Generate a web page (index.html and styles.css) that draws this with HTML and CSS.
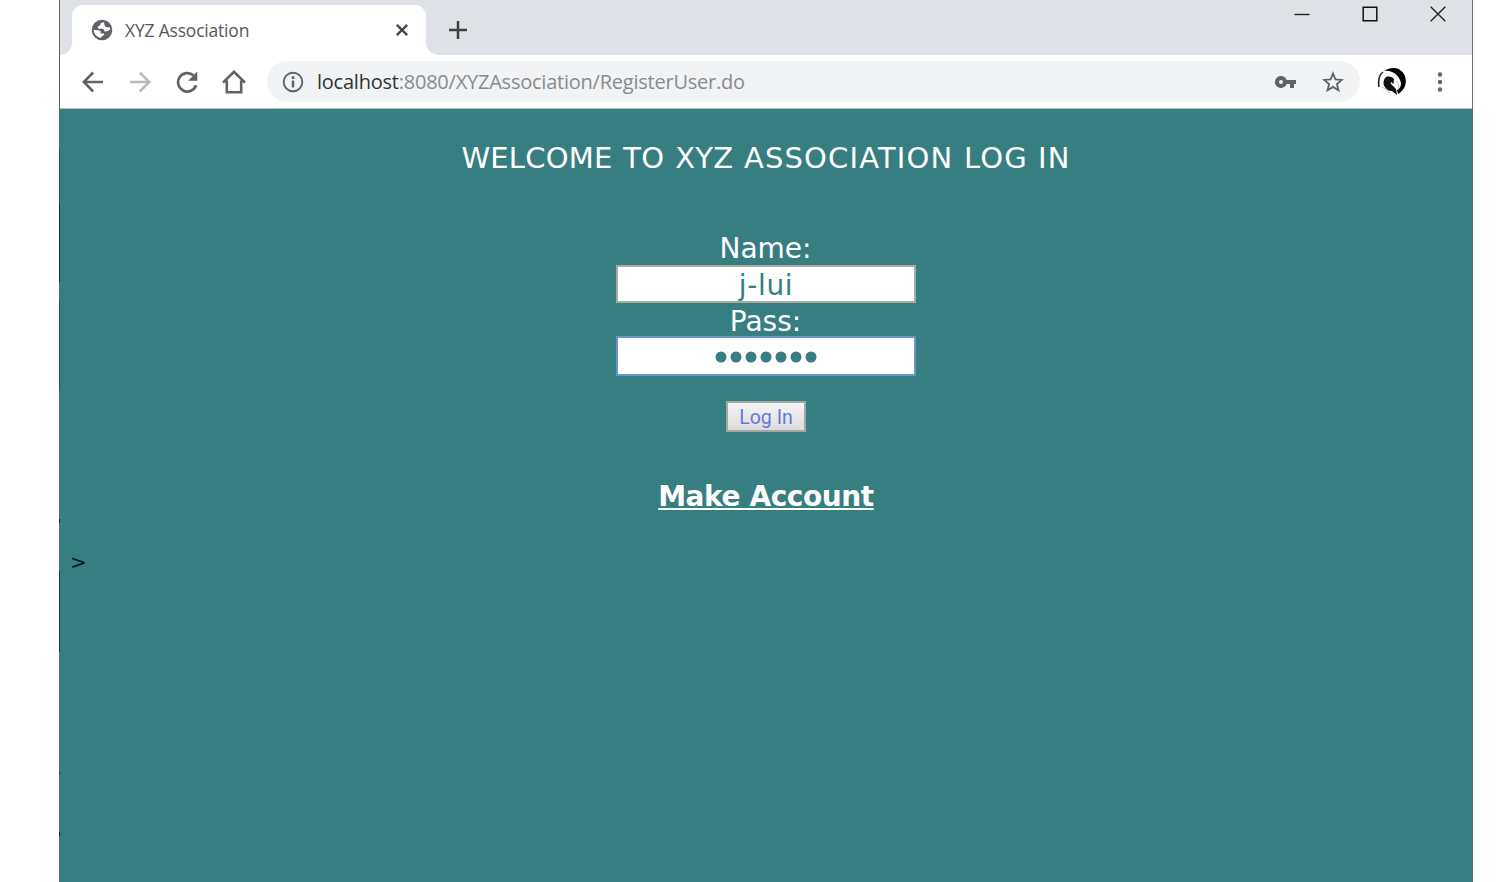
FILE: index.html
```html
<!DOCTYPE html>
<html lang="en">
<head>
<meta charset="utf-8">
<title>XYZ Association</title>
<link rel="stylesheet" href="styles.css">
</head>
<body>
<div class="window">
  <header class="tabstrip">
    <div class="tab">
      <svg class="globe" width="22" height="22" viewBox="0 0 22 22"><circle cx="11" cy="11" r="10.3" fill="#5f6368"/><path d="M13 3.200C10.800 3.200 9 4.300 9.300 5.800c.2 1.200-2.500 1-2.500 2.600 0 1.400 1.500 1.300 3 1.300 2.200 0 3.500.6 3.500 2 0 1.300 2 .9 3.400.4 1-.4 1.500-1 2.600-1 0-1-.3-2.200-.8-3.200-1.200.4-2.800.6-4-.2-1.300-1-.8-2.900-1.500-4.500z" fill="#fff"/><path d="M2.600 10.800c2.500.4 4.500.3 6 1 1.700.8 1.600 1.700.4 2.400 1.600.6 3.400-.3 4.300.8 0 1.500-2.600 1.700-3.400 4A8.600 8.600 0 0 1 2.600 10.800z" fill="#fff"/></svg>
      <span class="tab-title">XYZ Association</span>
      <svg class="tab-close" width="14" height="14" viewBox="0 0 14 14"><path d="M1.800 1.800 12.200 12.200M12.200 1.800 1.800 12.200" stroke="#45494d" stroke-width="2.400"/></svg>
    </div>
    <svg class="new-tab" width="18" height="18" viewBox="0 0 18 18"><path d="M9 0v18M0 9h18" stroke="#3c4043" stroke-width="2.500"/></svg>
    <div class="controls">
      <svg width="16" height="16" viewBox="0 0 16 16"><path d="M.5 8.500h15" stroke="#222" stroke-width="1.400"/></svg>
      <svg width="16" height="16" viewBox="0 0 16 16"><path d="M1.200 1.200h13.600v13.600H1.200z" fill="none" stroke="#111" stroke-width="1.500"/></svg>
      <svg width="16" height="16" viewBox="0 0 16 16"><path d="m.7.700 14.600 14.600M15.300.7.700 15.300" stroke="#222" stroke-width="1.400"/></svg>
    </div>
  </header>
  <div class="toolbar">
    <svg class="back" width="22" height="22" viewBox="0 0 22 22"><path d="M21 11H2M11.200 1.500 1.800 11l9.400 9.500" fill="none" stroke="#5f6368" stroke-width="2.500"/></svg>
    <svg class="forward" width="22" height="22" viewBox="0 0 22 22"><path d="M1 11h19M10.800 1.500l9.400 9.500-9.400 9.500" fill="none" stroke="#b9bbbd" stroke-width="2.500"/></svg>
    <svg class="reload" width="22" height="22" viewBox="0 0 22 22"><path d="M20 14.200A9.200 9.200 0 1 1 17.600 4.600" fill="none" stroke="#5f6368" stroke-width="2.700"/><path d="M21.300.6v9.100h-9.100z" fill="#5f6368"/></svg>
    <svg class="home" width="24" height="24" viewBox="0 0 24 24"><path d="M1 12.700 12 1.800l11 10.900M4.800 10.500v11.800h14.400V10.500" fill="none" stroke="#5f6368" stroke-width="2.600"/></svg>
    <div class="address">
      <svg class="info" width="22" height="22" viewBox="0 0 22 22"><circle cx="11" cy="11" r="9.300" fill="none" stroke="#5f6368" stroke-width="1.900"/><path d="M11 9.400v7M11 5.200v2.700" stroke="#5f6368" stroke-width="2.500"/></svg>
      <span class="url"><span class="host">localhost</span>:8080/XYZAssociation/RegisterUser.do</span>
      <svg class="key" width="22" height="14" viewBox="0 0 22 14"><path fill-rule="evenodd" d="M6 1a6 6 0 1 0 5.600 8H15v4h4V9h2V5h-9.400A6 6 0 0 0 6 1zm0 4a2 2 0 1 1 0 4 2 2 0 0 1 0-4z" fill="#5f6368"/></svg>
      <svg class="star" width="22" height="22" viewBox="0 0 22 22"><path d="m11 2.500 2.400 5.900 6.500.5-5 4.100 1.600 6.300-5.500-3.400-5.500 3.400L7.100 13l-5-4.100 6.500-.5z" fill="none" stroke="#5f6368" stroke-width="1.800"/></svg>
    </div>
    <svg class="avatar" width="30" height="30" viewBox="0 0 30 30"><circle cx="15" cy="15" r="14" fill="#fafafa"/><path d="M7 4C14-1 23 0 27 7c4 8 1 16-6 20l-1-4c4-2 5-6 3-10-2-5-6-8-11-9-2-.4-4-.3-5 0z" fill="#000"/><path d="M8 11c2-2 6-2 9 1l-.5 5-2.500-2c-1 1 0 2 1 3l4 4 1 6-5-4c-4 0-6-2-7-4-2-2-2-6 0-9z" fill="#111"/><path d="M6 5C1 9 1 14 2 20" fill="none" stroke="#222" stroke-width="1.600"/><path d="M19 14c3 3 3 6 2 9M5 20c3 1 4 4 8 6" fill="none" stroke="#bbb"/></svg>
    <svg class="menu" width="6" height="20" viewBox="0 0 6 20"><g fill="#5f6368"><circle cx="3" cy="2.500" r="2.200"/><circle cx="3" cy="10" r="2.200"/><circle cx="3" cy="17.500" r="2.200"/></g></svg>
  </div>
  <main class="page">
    <h1 class="heading"><span class="tight">WELCOME TO XYZ</span> <span class="loose">ASSOCIATION</span> <span class="medium">LOG IN</span></h1>
    <form class="login">
      <label class="label name-label" for="name">Name:</label>
      <input class="field" id="name" type="text" value="j-lui">
      <label class="label pass-label">Pass:</label>
      <div class="field focused"><svg width="102" height="12" viewBox="0 0 102 12"><g fill="#377e80"><circle cx="6" cy="6" r="5.500"/><circle cx="21" cy="6" r="5.500"/><circle cx="36" cy="6" r="5.500"/><circle cx="51" cy="6" r="5.500"/><circle cx="66" cy="6" r="5.500"/><circle cx="81" cy="6" r="5.500"/><circle cx="96" cy="6" r="5.500"/></g></svg></div>
      <button class="submit" type="button">Log In</button>
    </form>
    <a class="account">Make Account</a>
    <p class="stray">&gt;</p>
  </main>
</div>
</body>
</html>
```
FILE: styles.css
```css
* { box-sizing: border-box; }
body { margin: 0; background: #fff; overflow: hidden; }
svg { display: block; flex: none; }
.window {
  width: 1414px; height: 882px; margin-left: 59px; padding: 0 1px;
  display: flex; flex-direction: column;
  background:
    linear-gradient(#666 0 109px, #4d706b 109px 149px, #245062 149px 204px, #102d43 204px 282px, #4d706b 282px 300px, #245060 300px 391px, #52706d 391px 519px, #123 519px 523px, #52706d 523px 571px, #123950 571px 652px, #52706d 652px 772px, #233 772px 774px, #52706d 774px 832px, #123 832px 836px, #52706d 836px) 0 0 / 1px 100% no-repeat,
    linear-gradient(#777 0 109px, #56706f 109px) 100% 0 / 1px 100% no-repeat;
}
.tabstrip { height: 55px; flex: none; display: flex; align-items: flex-start; background: #dee1e6; }
.tab {
  position: relative; width: 354px; height: 50px; margin: 5px 0 0 12px; padding-left: 18px;
  display: flex; align-items: center; background: #fff; border-radius: 11px 11px 0 0;
}
.tab::before, .tab::after { content: ""; position: absolute; bottom: 0; width: 12px; height: 12px; }
.tab::before { left: -12px; background: radial-gradient(circle at 0 0, transparent 11.500px, #fff 12px); }
.tab::after { right: -12px; background: radial-gradient(circle at 100% 0, transparent 11.500px, #fff 12px); }
.globe { margin-left: 1px; }
.tab-title { margin-left: 12px; font: 17.500px/26px "Open Sans", sans-serif; color: #55595d; letter-spacing: -.2px; white-space: nowrap; }
.tab-close { margin: 0 17px 0 auto; }
.new-tab { margin: 21px 0 0 23px; }
.controls { display: flex; gap: 52px; margin: 6px 26px 0 auto; }
.toolbar { height: 54px; flex: none; display: flex; align-items: center; background: #fff; border-bottom: 1px solid #b9bfc1; }
.back { margin-left: 22px; }
.forward { margin-left: 25px; }
.reload { margin-left: 25px; }
.home { margin-left: 24px; }
.address {
  width: 1093px; height: 41px; margin-left: 21px; padding: 0 16px 0 15px;
  display: flex; align-items: center; background: #f1f3f4; border-radius: 21px;
}
.url { margin-left: 13px; font: 20px/28px "Open Sans", sans-serif; color: #878b90; white-space: nowrap; letter-spacing: -.23px; }
.host { color: #303336; }
.key { margin-left: auto; }
.star { margin-left: 25px; }
.avatar { margin-left: 17px; }
.menu { margin-left: 30px; }
.page {
  flex: 1; display: flex; flex-direction: column; align-items: center;
  background: #377e80; color: #fff; font-family: "DejaVu Sans", Verdana, sans-serif;
}
.heading { margin: 31px 0 0; font-size: 29px; font-weight: 400; line-height: 36px; letter-spacing: 1.500px; white-space: nowrap; }
.tight { letter-spacing: .2px; word-spacing: 1.500px; }
.loose { letter-spacing: 1.150px; }
.medium { letter-spacing: 1.100px; }
.login { margin-top: 55px; display: flex; flex-direction: column; align-items: center; }
.label { font-size: 28px; line-height: 36px; height: 34px; margin-right: 1px; }
.pass-label { height: 33px; line-height: 37px; }
.field {
  width: 300px; height: 38px; padding: 2px 0 0; border: 2px solid #a8aaa8; outline: 0; background: #fff;
  text-align: center; color: #377e80; font: 28px "DejaVu Sans", Verdana, sans-serif; letter-spacing: .7px;
}
.focused { height: 40px; border-color: #6794d0; display: flex; align-items: center; justify-content: center; }
.submit {
  width: 80px; height: 31px; margin-top: 25px; padding: 2px 0 0; border: 2px solid #a5a8a6; border-radius: 0;
  background: linear-gradient(#f5f5f5, #dcdcdc); color: #6477dc; font: 19.500px/26px Roboto, sans-serif; white-space: nowrap;
}
.account { margin-top: 47px; font-size: 28px; line-height: 36px; font-weight: 700; letter-spacing: -.42px; text-decoration: underline; text-decoration-thickness: 2px; text-underline-offset: 2px; white-space: nowrap; }
.stray { align-self: flex-start; margin: 34px 0 0 10px; font: 20px/26px "DejaVu Sans", sans-serif; color: #06181c; }
```
